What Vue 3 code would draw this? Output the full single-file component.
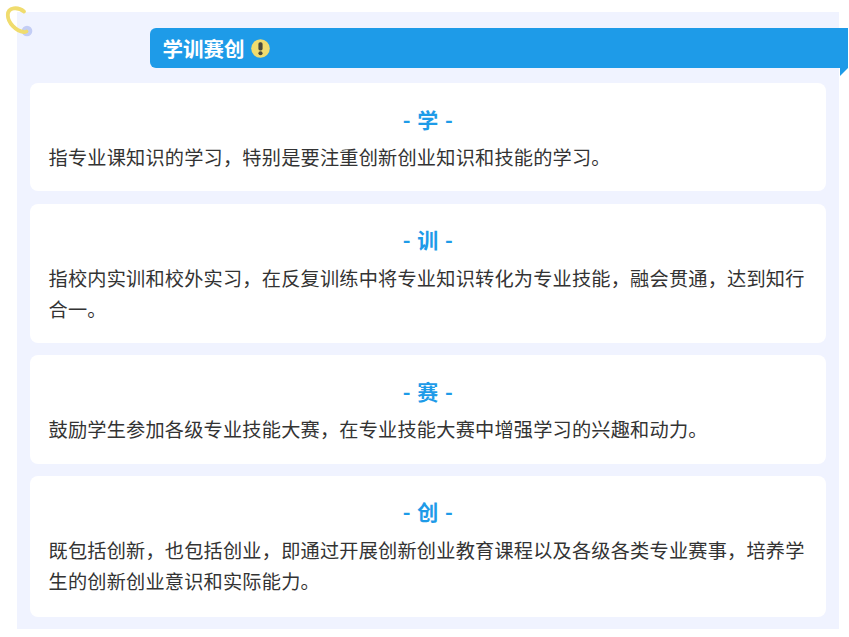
<script setup>
const cards = [
  { t: '学', d: '指专业课知识的学习，特别是要注重创新创业知识和技能的学习。' },
  { t: '训', d: '指校内实训和校外实习，在反复训练中将专业知识转化为专业技能，融会贯通，达到知行合一。' },
  { t: '赛', d: '鼓励学生参加各级专业技能大赛，在专业技能大赛中增强学习的兴趣和动力。' },
  { t: '创', d: '既包括创新，也包括创业，即通过开展创新创业教育课程以及各级各类专业赛事，培养学生的创新创业意识和实际能力。' },
]
</script>

<template>
  <div class="page">
    <div class="panel">
      <svg class="ring" width="34" height="40" viewBox="0 0 34 40">
        <circle cx="27" cy="31" r="5.300" fill="#c3cdf5" />
        <path d="M24 11.500C18 6.500 7.800 7 7.800 15C7.800 23 16 31 24 32C25 32.100 26 32 26.500 31.500" fill="none" stroke="#f0dc6e" stroke-width="3.800" stroke-linecap="round" />
      </svg>
      <div class="head">
        <span class="head-text">学训赛创</span>
        <svg class="warn" width="19" height="19" viewBox="0 0 20 20">
          <circle cx="10" cy="10" r="9.800" fill="#f0dc6e" />
          <rect x="7.800" y="3.500" width="4.400" height="8.500" rx="1.800" fill="#4b4a3c" />
          <circle cx="10" cy="15" r="2.200" fill="#4b4a3c" />
        </svg>
        <i class="fold"></i>
      </div>
      <div class="list">
        <section v-for="c in cards" :key="c.t" class="card">
          <h3 class="title">- {{ c.t }} -</h3>
          <p class="desc">{{ c.d }}</p>
        </section>
      </div>
    </div>
  </div>
</template>

<style scoped>
.page {
  width: 849px;
  height: 637px;
  padding: 12px 10px 8px 17px;
  box-sizing: border-box;
  background: #fff;
  font-family: "Noto Sans CJK SC", "Noto Sans", sans-serif;
}
.panel {
  position: relative;
  height: 617px;
  padding: 16px 13px 0;
  box-sizing: border-box;
  background: #f0f3ff;
}
.ring {
  position: absolute;
  left: -17px;
  top: -12px;
}
.head {
  position: relative;
  display: flex;
  align-items: center;
  gap: 6.500px;
  width: 698px;
  height: 40px;
  margin-left: 120px;
  padding-left: 12.500px;
  box-sizing: border-box;
  background: #1e9be8;
  border-radius: 6px 0 0 6px;
}
.head-text {
  color: #fff;
  font-size: 20.500px;
  font-weight: 700;
}
.fold {
  position: absolute;
  right: 0;
  top: 40px;
  width: 0;
  height: 0;
  border-top: 8px solid #1e9be8;
  border-right: 8px solid transparent;
}
.list {
  display: flex;
  flex-direction: column;
  gap: 12.100px;
  margin-top: 15px;
}
.card {
  padding: 18.500px 18px 18px 18.500px;
  background: #fff;
  border-radius: 8px;
}
.card:last-child {
  padding-bottom: 19px;
}
.title {
  margin: 0 0 5.500px;
  text-align: center;
  color: #1e9be8;
  font-size: 21px;
  font-weight: 700;
  line-height: 35px;
  letter-spacing: 1px;
}
.desc {
  margin: 0;
  color: #333;
  font-size: 19.200px;
  line-height: 31.400px;
  letter-spacing: 0.200px;
}
</style>
